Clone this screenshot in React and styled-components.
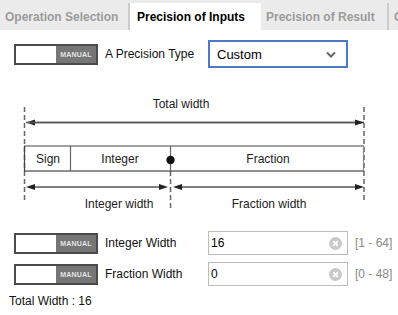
import styled, { createGlobalStyle } from "styled-components";

const GlobalStyle = createGlobalStyle`
  body {
    margin: 0;
    background: #fff;
    font-family: "Liberation Sans", Arial, sans-serif;
    color: #111;
  }
`;

export default function App() {
    return (
        <Page>
            <GlobalStyle />
            <TabBar>
                <Tab>Operation Selection</Tab>
                <Tab active>Precision of Inputs</Tab>
                <Tab>Precision of Result</Tab>
                <Tab>Conversion</Tab>
            </TabBar>

            <Body>
                <Row>
                    <Toggle />
                    <Label>A Precision Type</Label>
                    <Select>
                        <span>Custom</span>
                        <svg width="10" height="7" viewBox="0 0 10 7">
                            <path d="M1 1.5 L5 5.5 L9 1.5" fill="none" stroke="#666" strokeWidth="2" />
                        </svg>
                    </Select>
                </Row>
            </Body>

            <Diagram />

            <Body>
                <Fields>
                    <FieldRow label="Integer Width" value="16" range="[1 - 64]" />
                    <FieldRow label="Fraction Width" value="0" range="[0 - 48]" />
                </Fields>
                <Total>Total Width : 16</Total>
            </Body>
        </Page>
    );
}

const Toggle = () => (
    <ToggleBox>
        <ToggleKnob />
        <ToggleText>MANUAL</ToggleText>
    </ToggleBox>
);

const FieldRow = ({ label, value, range }) => (
    <Row>
        <Toggle />
        <Label>{label}</Label>
        <Input>
            <span>{value}</span>
            <svg width="13" height="13" viewBox="0 0 13 13">
                <circle cx="6.5" cy="6.5" r="6.5" fill="#c9c9c9" />
                <path d="M4.2 4.2 L8.8 8.8 M8.8 4.2 L4.2 8.8" stroke="#fff" strokeWidth="1.8" />
            </svg>
        </Input>
        <Range>{range}</Range>
    </Row>
);

const Arrow = ({ x1, x2, y }) => {
    const dir = x2 > x1 ? 1 : -1;
    return (
        <g>
            <line x1={x1} y1={y} x2={x2 - dir * 6} y2={y} stroke="#555" strokeWidth="1.5" />
            <polygon
                points={`${x2},${y} ${x2 - dir * 9},${y - 3} ${x2 - dir * 9},${y + 3}`}
                fill="#222"
            />
        </g>
    );
};

const Diagram = () => (
    <DiagramSvg width="398" height="163" viewBox="0 68 398 163">
        <g fontFamily="Liberation Sans, Arial, sans-serif" fontSize="12" fill="#222" textAnchor="middle">
            <text x="181" y="108">Total width</text>
            <text x="48" y="163">Sign</text>
            <text x="120" y="163">Integer</text>
            <text x="268" y="163">Fraction</text>
            <text x="119" y="208">Integer width</text>
            <text x="269" y="208">Fraction width</text>
        </g>

        <g stroke="#666" strokeWidth="1.5" strokeDasharray="5 3">
            <line x1="24.5" y1="107" x2="24.5" y2="200" />
            <line x1="364" y1="107" x2="364" y2="200" />
            <line x1="170.5" y1="171" x2="170.5" y2="210" />
        </g>

        <Arrow x1={364} x2={26} y={122.5} />
        <Arrow x1={26} x2={364} y={122.5} />
        <Arrow x1={100} x2={26} y={187} />
        <Arrow x1={100} x2={168} y={187} />
        <Arrow x1={270} x2={173} y={187} />
        <Arrow x1={270} x2={364} y={187} />

        <g fill="none" strokeWidth="1.2">
            <line x1="24" y1="146" x2="364" y2="146" stroke="#444" />
            <line x1="24" y1="171" x2="364" y2="171" stroke="#222" />
            <line x1="24.5" y1="146" x2="24.5" y2="171" stroke="#444" />
            <line x1="363.5" y1="146" x2="363.5" y2="171" stroke="#888" />
            <line x1="70.5" y1="146" x2="70.5" y2="171" stroke="#666" />
            <line x1="170.5" y1="146" x2="170.5" y2="171" stroke="#666" />
        </g>
        <circle cx="170.5" cy="160" r="4.2" fill="#111" />
    </DiagramSvg>
);

const Page = styled.div`
  width: 398px;
  height: 315px;
  overflow: hidden;
`;

const TabBar = styled.div`
  display: flex;
  height: 27px;
  padding-top: 3px;
  background: #ebebeb;
  border-top: 1px solid #d8d8d8;
  box-sizing: content-box;
  margin-top: -1px;
  overflow: hidden;
  white-space: nowrap;
`;

const Tab = styled.div`
  flex: 0 0 auto;
  width: 128px;
  padding-left: ${({ active }) => (active ? "7px" : "5px")};
  display: flex;
  align-items: center;
  font-size: 12px;
  font-weight: bold;
  color: ${({ active }) => (active ? "#000" : "#9b9b9b")};
  background: ${({ active }) => (active ? "#fff" : "transparent")};
  border-right: 2px solid ${({ active }) => (active ? "transparent" : "#cccccc")};
  &:first-child {
    width: 123px;
  }
  &:nth-child(2) {
    width: 122px;
  }
  &:nth-child(3) {
    width: 121px;
  }
`;

const Body = styled.div`
  padding-left: 14px;
`;

const Row = styled.div`
  display: flex;
  align-items: center;
  gap: 0;
  margin-top: 10px;
`;

const ToggleBox = styled.div`
  display: flex;
  width: 80px;
  height: 17px;
  border: 2px solid #4b4b4b;
  background: #767676;
`;

const ToggleKnob = styled.div`
  width: 40px;
  background: #fff;
`;

const ToggleText = styled.div`
  flex: 1;
  display: flex;
  align-items: center;
  justify-content: center;
  font-size: 7px;
  font-weight: bold;
  color: #e4e4e4;
  letter-spacing: 0.2px;
`;

const Label = styled.div`
  width: 103px;
  padding-left: 7px;
  font-size: 12px;
  color: #111;
`;

const Select = styled.div`
  display: flex;
  align-items: center;
  justify-content: space-between;
  box-sizing: border-box;
  width: 140px;
  height: 28px;
  padding: 0 10px 0 7px;
  border: 2px solid #4d79c7;
  font-size: 13px;
  color: #000;
`;

const DiagramSvg = styled.svg`
  display: block;
`;

const Fields = styled.div`
  display: flex;
  flex-direction: column;
  gap: 7px;
  & > ${Row} {
    margin-top: 0;
  }
`;

const Input = styled.div`
  display: flex;
  align-items: center;
  justify-content: space-between;
  box-sizing: border-box;
  width: 140px;
  height: 24px;
  padding: 0 5px 0 2px;
  border: 1px solid #bcbcbc;
  font-size: 12px;
  color: #000;
`;

const Range = styled.div`
  margin-left: 7px;
  font-size: 12px;
  color: #8a8a8a;
`;

const Total = styled.div`
  margin-top: 8px;
  margin-left: -5px;
  font-size: 12px;
  color: #111;
`;
